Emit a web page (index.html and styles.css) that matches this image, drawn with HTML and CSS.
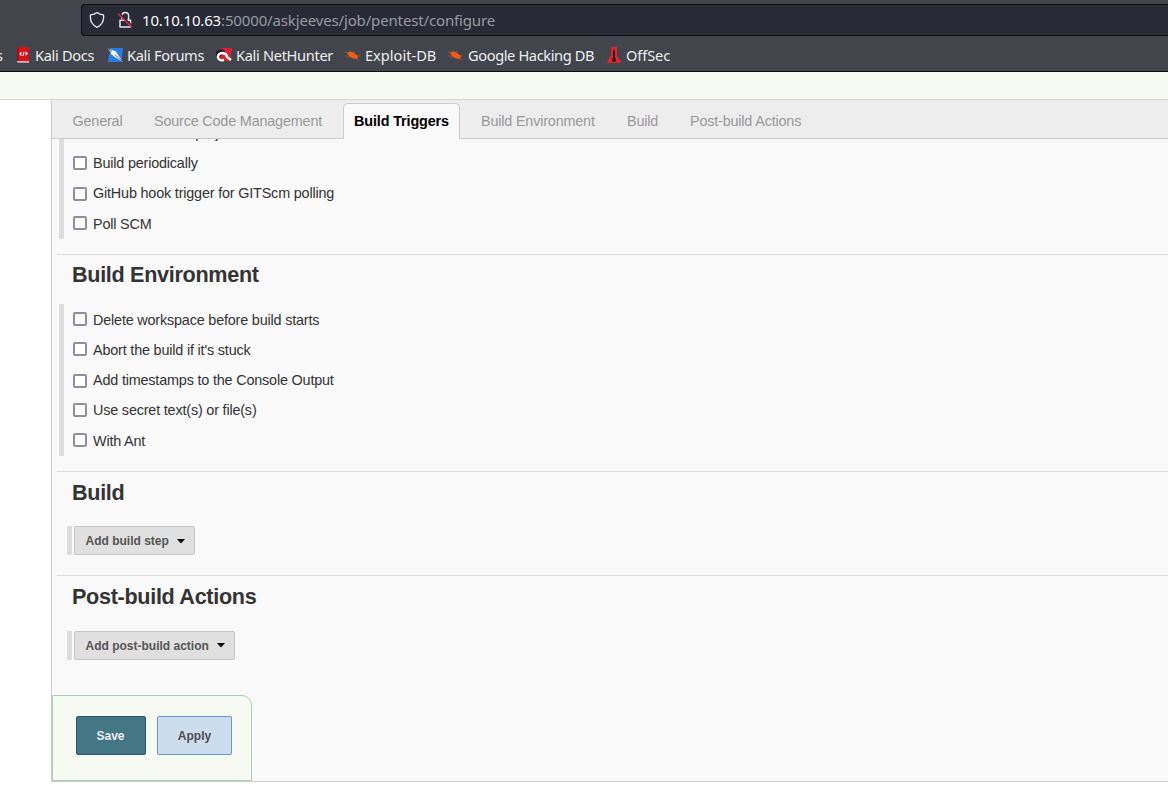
FILE: index.html
```html
<!DOCTYPE html>
<html lang="en">
<head>
<meta charset="utf-8">
<title>pentest Config [Jenkins]</title>
<link rel="stylesheet" href="styles.css">
</head>
<body>
<header class="browser">
  <div class="urlbar">
    <svg class="shield" width="16" height="18" viewBox="0 0 16 18"><path d="M8 1.600C6 3.200 3.800 3.700 1.500 3.900C.8 9.500 3 14 8 16.300C13 14 15.200 9.500 14.500 3.900C12.200 3.700 10 3.200 8 1.600Z" fill="none" stroke="#e9e9ed" stroke-width="1.3" stroke-linejoin="round"/></svg>
    <svg class="lock" width="16" height="18" viewBox="0 0 16 18"><path d="M5 8V4.800A3.300 3.300 0 0 1 11.600 4.800V9M3 9.300H13.500V16H3Z" fill="none" stroke="#e4e4e8" stroke-width="1.500" stroke-linejoin="round"/><path d="M2.200 2L15.200 15" stroke="#282a36" stroke-width="1.500"/><path d="M1.200 2.800L14.500 16.200" stroke="#e22850" stroke-width="1.400"/></svg>
    <span class="url"><b>10.10.10.63</b>:50000/askjeeves/job/pentest/configure</span>
  </div>
  <nav class="bookmarks">
    <span class="mark cut">s</span>
    <span class="mark docs"><svg width="16" height="16" viewBox="0 0 16 16"><path d="M2 1Q2 0 3 0H14V14H2Z" fill="#dc1015"/><path d="M2 1Q2 0 3 0H4V14H2Z" fill="#9d1218"/><path d="M2 14H14V15.700H3Q2 15.700 2 14Z" fill="#d8b5b5"/><path d="M6.500 5.500L5 7L6.500 8.500M10.500 5L12 6.500L10.500 8M9 5L8 8.800" fill="none" stroke="#fff" stroke-width="1.200"/></svg>Kali Docs</span>
    <span class="mark forums"><svg width="16" height="16" viewBox="0 0 16 16"><path d="M3 1H16L14.500 15H1Z" fill="#287ce9"/><path d="M0 1L5 3L9 4.500L11 8L16 15L11 12L7 9.500L4 7L4 5Z" fill="#fff"/><path d="M0 1L5 4M8 8L15 14" stroke="#24262b" stroke-width=".7" fill="none"/></svg>Kali Forums</span>
    <span class="mark hunter"><svg width="16" height="16" viewBox="0 0 16 16"><path d="M5 1H16L14 14H2V8Z" fill="#dc2336"/><path d="M0 5Q5 0 9 4L7 7L3 11L0 8Z" fill="#1b1b20"/><path d="M8 13Q2 14 2 10Q2 6 7 6Q11 7 11 10L15 13" fill="none" stroke="#fff" stroke-width="2.400"/></svg>Kali NetHunter</span>
    <span class="mark exploit"><svg width="16" height="16" viewBox="0 0 16 16"><path d="M2 6Q5 3 9 6L13 9L12 12Q7 12 4 9Z" fill="#ed6012"/><path d="M0 5L4 6M0 9H4M4 3L6 5M8 4L10 6M12 9H15M12 11L13 13M5 10L3 11" stroke="#b65429" stroke-width=".8"/></svg>Exploit-DB</span>
    <span class="mark google"><svg width="16" height="16" viewBox="0 0 16 16"><path d="M2 6Q5 3 9 6L13 9L12 12Q7 12 4 9Z" fill="#ed6012"/><path d="M0 5L4 6M0 9H4M4 3L6 5M8 4L10 6M12 9H15M12 11L13 13M5 10L3 11" stroke="#b65429" stroke-width=".8"/></svg>Google Hacking DB</span>
    <span class="mark offsec"><svg width="16" height="16" viewBox="0 0 16 16"><path d="M5 0H11V9L14.500 14V16H1.500V14L5 9Z" fill="#e3242b"/><path d="M8 2L9 4V10L10 13L9 15H7L6 13L7 10V4Z" fill="#351216"/></svg>OffSec</span>
  </nav>
</header>
<div class="crumbs"></div>
<main class="config">
  <nav class="tabs">
    <span class="tab general">General</span><span class="tab scm">Source Code Management</span><span class="tab active">Build Triggers</span><span class="tab environment">Build Environment</span><span class="tab build">Build</span><span class="tab post">Post-build Actions</span>
  </nav>
  <section class="section triggers">
    <div class="options">
      <div class="clip"><span class="clipped">Build after other projects are built</span></div>
      <label class="option"><i class="box"></i><span>Build periodically</span></label>
      <label class="option low"><i class="box"></i><span>GitHub hook trigger for GITScm polling</span></label>
      <label class="option poll"><i class="box"></i><span>Poll SCM</span></label>
    </div>
  </section>
  <section class="section env">
    <h2>Build Environment</h2>
    <div class="options">
      <label class="option high"><i class="box"></i><span>Delete workspace before build starts</span></label>
      <label class="option high"><i class="box"></i><span>Abort the build if it's stuck</span></label>
      <label class="option low"><i class="box"></i><span>Add timestamps to the Console Output</span></label>
      <label class="option"><i class="box"></i><span>Use secret text(s) or file(s)</span></label>
      <label class="option ant"><i class="box"></i><span>With Ant</span></label>
    </div>
  </section>
  <section class="section steps">
    <h2>Build</h2>
    <div class="adder"><button class="menu step"><span>Add build step</span><svg width="8" height="5" viewBox="0 0 8 5"><path d="M0 0H8L4 4.500Z"/></svg></button></div>
  </section>
  <section class="section actions">
    <h2>Post-build Actions</h2>
    <div class="adder"><button class="menu action"><span>Add post-build action</span><svg width="8" height="5" viewBox="0 0 8 5"><path d="M0 0H8L4 4.500Z"/></svg></button></div>
  </section>
  <footer class="savebar"><button class="save">Save</button><button class="apply">Apply</button></footer>
</main>
</body>
</html>
```
FILE: styles.css
```css
* { box-sizing: border-box; }
body { margin: 0; background: #fff; color: #333; font: 14.4px/20px "Liberation Sans", Arial, sans-serif; letter-spacing: -.18px; overflow: hidden; }
.browser { height: 72px; background: #42454c; border-bottom: 1px solid #0c0c0d; padding-top: 4px; }
.urlbar { height: 32px; margin-left: 81px; border: 1px solid #0e0f13; border-right: 0; border-radius: 4px 0 0 4px; background: #282a36; display: flex; align-items: center; padding-left: 7px; font: 15px/20px "Noto Sans", sans-serif; letter-spacing: -.15px; color: #9a9b9f; }
.lock { margin-left: 12px; }
.url { margin-left: 9px; white-space: nowrap; }
.url b { font-weight: 400; color: #fbfbfe; }
.bookmarks { display: grid; grid-template-columns: 15px 92px 109px 129px 103px 158px 80px; height: 35px; padding-top: 2px; align-items: center; color: #eeeeef; font: 14.6px/20px "Noto Sans", sans-serif; letter-spacing: -.32px; }
.mark { display: flex; align-items: center; gap: 4px; white-space: nowrap; }
.cut { margin-left: -4px; }
.exploit { letter-spacing: 0; }
.google { letter-spacing: -.38px; }
.offsec { letter-spacing: -.1px; }
.crumbs { height: 28px; background: #f6faf2; border-bottom: 1px solid #d3d7cf; }
.config { height: 682px; margin-left: 51px; background: #f9f9f9; border-left: 1px solid #ccc; border-bottom: 1px solid #ccc; }
.tabs { height: 39px; background: #ededed; border-bottom: 1px solid #ccc; padding: 3px 0 0 10px; display: flex; color: #999; }
.tab { height: 36px; line-height: 37px; padding: 0 10px; white-space: nowrap; }
.general { width: 82px; padding-left: 10.5px; }
.scm { width: 199px; }
.environment { width: 146px; margin-left: 11px; }
.build { width: 63px; }
.active { width: 117px; line-height: 35px; letter-spacing: -.13px; color: #000; font-weight: 700; background: #f9f9f9; border: 1px solid #ccc; border-bottom: 0; border-radius: 5px 5px 0 0; }
.section { margin-left: 5px; }
.section + .section { border-top: 1px solid #ddd; }
.triggers { height: 115px; }
.env { height: 217px; }
.steps { height: 104px; }
.actions { height: 120px; }
.options { border-left: 5px solid #ddd; margin-left: 2px; padding-left: 9px; }
.triggers .options { height: 100px; }
.env .options { height: 152px; margin-top: 18px; padding-top: 1px; }
.clip { height: 9px; overflow: hidden; display: flex; align-items: flex-end; padding-left: 20px; }
.clipped { height: 20px; margin-bottom: 5px; white-space: nowrap; }
.option { height: 30px; display: flex; align-items: center; gap: 6px; white-space: nowrap; }
.box { width: 14px; height: 14px; border: 2px solid #8f8f9d; border-radius: 2px; background: #fff; }
.low .box { margin-top: 2px; }
.high .box { margin-top: -2px; }
.poll, .ant { height: 32px; }
.poll .box, .ant .box { margin-top: -2px; }
h2 { margin: 0; padding: 6px 0 0 15px; height: 31px; font-size: 21.6px; line-height: 28px; letter-spacing: -.31px; white-space: nowrap; }
.steps h2, .actions h2 { padding-top: 7px; }
.adder { height: 29px; border-left: 5px solid #ddd; margin: 24px 0 0 10px; padding-left: 2px; display: flex; }
.steps .adder { margin-top: 23px; }
button { font: 700 12px/15px "Liberation Sans", Arial, sans-serif; letter-spacing: 0; border-radius: 2px; padding: 0; }
.menu { height: 29px; border: 1px solid #c6c6c6; background: #e0e0e0; display: flex; align-items: center; justify-content: space-between; padding: 0 9px 0 10.5px; color: #555; white-space: nowrap; }
.menu span { padding-top: 1px; }
.step { width: 121px; }
.step svg { margin-top: 1px; }
.action { width: 161px; }
.menu svg { fill: #000; }
.savebar { width: 200px; height: 86px; border: 1px solid #a9cfb9; border-top-right-radius: 10px; background: #f6faf2; padding: 20px 0 0 23px; display: flex; gap: 11px; }
.save { width: 70px; height: 39px; padding: 1px 1px 0 0; color: #eee; background: #457686; border: 1px solid #2c5668; }
.apply { width: 75px; height: 39px; padding-top: 1px; background: #ccdded; border: 1px solid #6698d0; color: #4d4d4d; }
```
